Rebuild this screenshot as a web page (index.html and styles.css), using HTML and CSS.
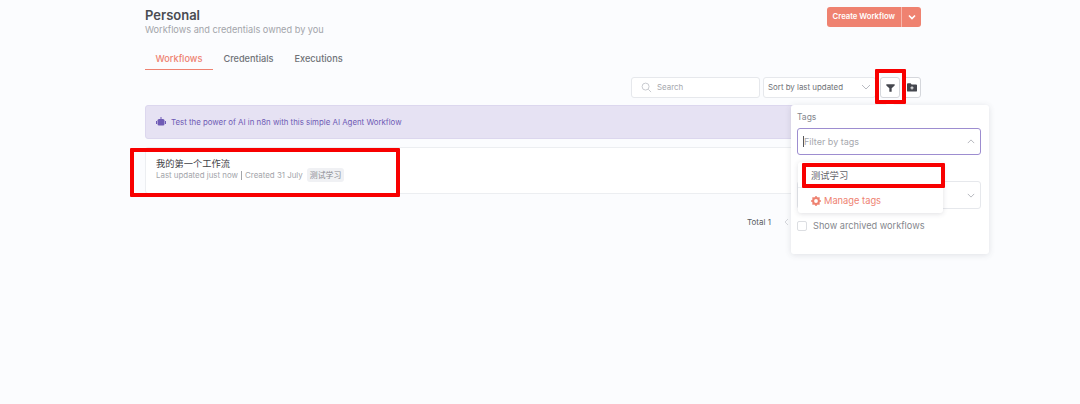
FILE: index.html
```html
<!DOCTYPE html>
<html lang="en">
<head>
<meta charset="utf-8">
<title>Personal</title>
<link rel="stylesheet" href="styles.css">
</head>
<body>
<main class="page">
  <header class="head">
    <div>
      <h1 class="title">Personal</h1>
      <p class="subtitle">Workflows and credentials owned by you</p>
    </div>
    <div class="create">
      <span class="create-label">Create Workflow</span>
      <span class="create-caret">
        <svg width="8" height="8" viewBox="0 0 8 8"><path d="M1 2.500 4 5.500 7 2.500" fill="none" stroke="#fff" stroke-width="1.600"/></svg>
      </span>
    </div>
  </header>
  <nav class="tabs">
    <span class="tab active">Workflows</span>
    <span class="tab">Credentials</span>
    <span class="tab">Executions</span>
  </nav>
  <div class="toolbar">
    <div class="search">
      <svg width="11" height="11" viewBox="0 0 12 12"><circle cx="5" cy="5" r="3.800" fill="none" stroke="#c4c6cc" stroke-width="1"/><path d="M8 8l3 3" stroke="#c4c6cc" stroke-width="1"/></svg>
      <span>Search</span>
    </div>
    <div class="sort">
      <span>Sort by last updated</span>
      <svg width="10" height="6" viewBox="0 0 10 6"><path d="M1 1l4 4 4-4" fill="none" stroke="#b9bbc2" stroke-width="1"/></svg>
    </div>
    <div class="icon-btn filter-btn">
      <svg width="9" height="8" viewBox="0 0 10 9"><path d="M0.300 0.300h9.400v1.500L6.300 4.800V8.700H3.700V4.800L0.300 1.800z" fill="#45474e"/></svg>
    </div>
    <div class="icon-btn folder-btn">
      <svg width="10" height="9" viewBox="0 0 10 9"><path d="M0 1.200C0 .7.4.3.9.3h2.700l1 1.100h4.500c.5 0 .9.4.9.9v5.400c0 .5-.4.9-.9.9H.9C.4 8.600 0 8.200 0 7.700z" fill="#45474e"/><path d="M5 3.300v3.200M3.400 4.900h3.200" stroke="#fff" stroke-width=".9"/></svg>
    </div>
  </div>
  <div class="banner">
    <svg width="10" height="9" viewBox="0 0 10 9"><rect x="1.500" y="2" width="7" height="6.500" rx="1.500" fill="#6f5bb5"/><rect x="0" y="4" width="1" height="3" fill="#6f5bb5"/><rect x="9" y="4" width="1" height="3" fill="#6f5bb5"/><rect x="4.500" y="0" width="1" height="2" fill="#6f5bb5"/></svg>
    <span>Test the power of AI in n8n with this simple AI Agent Workflow</span>
  </div>
  <article class="card">
    <div class="card-name">我的第一个工作流</div>
    <div class="card-meta">
      <span>Last updated just now</span>
      <span class="sep"></span>
      <span>Created 31 July</span>
      <span class="chip">测试学习</span>
    </div>
  </article>
  <div class="pager">
    <span>Total 1</span>
    <svg width="5" height="8" viewBox="0 0 5 8"><path d="M4 1 1 4l3 3" fill="none" stroke="#d5d7dc" stroke-width="1"/></svg>
  </div>
</main>

<aside class="popover">
  <span class="pop-arrow"></span>
  <div class="pop-label">Tags</div>
  <div class="tag-input">
    <span class="caret"></span>
    <span>Filter by tags</span>
    <svg width="8" height="5" viewBox="0 0 10 6"><path d="M1 5l4-4 4 4" fill="none" stroke="#a5a7ae" stroke-width="1"/></svg>
  </div>
  <div class="under-select">
    <svg width="8" height="5" viewBox="0 0 10 6"><path d="M1 1l4 4 4-4" fill="none" stroke="#a5a7ae" stroke-width="1"/></svg>
  </div>
  <label class="archived">
    <span class="check"></span>
    <span>Show archived workflows</span>
  </label>
</aside>

<div class="tag-menu">
  <div class="tag-option">测试学习</div>
  <div class="tag-manage">
    <svg width="10" height="10" viewBox="0 0 10 10"><circle cx="5" cy="5" r="2.900" fill="none" stroke="#ee8271" stroke-width="2"/><path d="M5 0v2M5 8v2M0 5h2M8 5h2M1.500 1.500l1.400 1.400M7.100 7.100l1.400 1.400M8.500 1.500 7.100 2.900M2.900 7.100 1.500 8.500" stroke="#ee8271" stroke-width="1.500"/></svg>
    <span>Manage tags</span>
  </div>
</div>

<div class="mark mark-card"></div>
<div class="mark mark-filter"></div>
<div class="mark mark-tag"></div>
</body>
</html>
```
FILE: styles.css
```css
* { box-sizing: border-box; }
html, body { margin: 0; height: 100%; }
body {
  position: relative;
  height: 404px;
  overflow: hidden;
  background: #fbfcfe;
  font-family: Inter, "Noto Sans CJK SC", sans-serif;
  color: #7e8186;
}
.page {
  width: 776px;
  margin-left: 145px;
  padding-top: 7px;
}
.head { display: flex; justify-content: space-between; align-items: flex-start; height: 36px; }
.title { margin: 0; font-size: 13px; line-height: 16px; font-weight: 600; color: #4a4c52; }
.subtitle { margin: 0; font-size: 9.200px; line-height: 13px; color: #a3a5aa; }
.create { display: flex; height: 20px; border-radius: 3px; background: #ef8270; color: #fff; font-size: 7.700px; font-weight: 600; align-items: center; }
.create-label { padding: 0 6px; line-height: 20px; }
.create-caret { width: 20px; height: 20px; border-left: 1px solid #f8b6ab; display: flex; align-items: center; justify-content: center; }
.tabs { display: flex; height: 27px; }
.tab { padding: 0 10.500px; font-size: 9.200px; line-height: 31px; color: #6f7277; font-weight: 500; }
.tab.active { color: #ee8271; border-bottom: 1px solid #ee8271; }
.toolbar { display: flex; justify-content: flex-end; gap: 3px; margin-top: 7px; height: 21px; font-size: 7.900px; }
.search { width: 129px; border: 1px solid #e6e8ec; border-radius: 3px; background: #fff; display: flex; align-items: center; gap: 5px; padding: 0 0 1px 9px; color: #a6a8ae; }
.sort { width: 113px; border: 1px solid #e6e8ec; border-radius: 3px; background: #fff; display: flex; align-items: center; justify-content: space-between; padding: 0 4px 1px; color: #6f7277; }
.icon-btn { border: 1px solid #d5d7dc; border-radius: 3px; background: #fff; display: flex; align-items: center; justify-content: center; }
.filter-btn { width: 20px; margin-left: 1px; }
.folder-btn { width: 18px; }
.banner { margin-top: 7px; height: 34px; background: #e6e2f3; border: 1px solid #dcd7ee; border-radius: 3px; display: flex; align-items: center; gap: 5px; padding: 0 0 1px 10px; font-size: 7.850px; color: #6f5bb5; }
.card { margin-top: 8px; height: 47px; background: #fff; border: 1px solid #eceef1; border-radius: 3px; padding: 10px 10px 0; }
.card-name { font-size: 9.250px; line-height: 11px; color: #3f4146; }
.card-meta { display: flex; align-items: center; gap: 3px; margin-top: -1px; font-size: 7.900px; line-height: 12px; color: #a3a5aa; }
.sep { width: 1px; height: 9px; background: #a3a5aa; }
.chip { margin-left: 1px; padding: 1px 3px; background: #f0f1f4; border-radius: 3px; color: #8b8d93; }
.pager { display: flex; align-items: center; gap: 13px; margin-top: 22px; padding-left: 602px; font-size: 8px; line-height: 12px; color: #5a5c62; }
.popover { position: absolute; left: 791px; top: 105px; width: 198px; height: 149px; background: #fff; border-radius: 3px; box-shadow: 0 1px 6px rgba(60, 64, 80, .14); padding: 7px 8px 0 6px; }
.pop-arrow { position: absolute; left: 96px; top: -3px; width: 6px; height: 6px; background: #fff; transform: rotate(45deg); }
.pop-label { font-size: 8.500px; line-height: 11px; color: #85878d; }
.tag-input { margin-top: 5px; height: 27px; border: 1px solid #9d8dd0; border-radius: 3px; display: flex; align-items: center; padding: 0 5px 0 5px; font-size: 9px; color: #a6a8ae; }
.tag-input svg { margin-left: auto; }
.caret { width: 1px; height: 11px; background: #55575c; }
.under-select { margin-top: 26px; height: 28px; border: 1px solid #e6e8ec; border-radius: 3px; display: flex; align-items: center; justify-content: flex-end; padding-right: 5px; }
.archived { margin-top: 11px; display: flex; align-items: center; gap: 6px; font-size: 9.200px; line-height: 12px; color: #85878d; }
.check { width: 10px; height: 10px; border: 1px solid #dcdee2; border-radius: 2px; background: #fff; }
.tag-menu { position: absolute; left: 798px; top: 162px; width: 145px; height: 51px; background: #fff; border-radius: 3px; box-shadow: 0 1px 5px rgba(60, 64, 80, .16); }
.tag-option { height: 26px; padding-left: 13px; font-size: 9.300px; line-height: 27px; color: #5f6167; border-bottom: 1px solid #eceef1; }
.tag-manage { height: 25px; display: flex; align-items: center; gap: 3px; padding-left: 13px; font-size: 9.300px; color: #ee8271; }
.mark { position: absolute; border: 4px solid #f80000; border-radius: 1px; }
.mark-card { left: 130px; top: 148px; width: 270px; height: 49px; }
.mark-filter { left: 875px; top: 69px; width: 31px; height: 35px; }
.mark-tag { left: 802px; top: 163px; width: 143px; height: 25px; }
```
